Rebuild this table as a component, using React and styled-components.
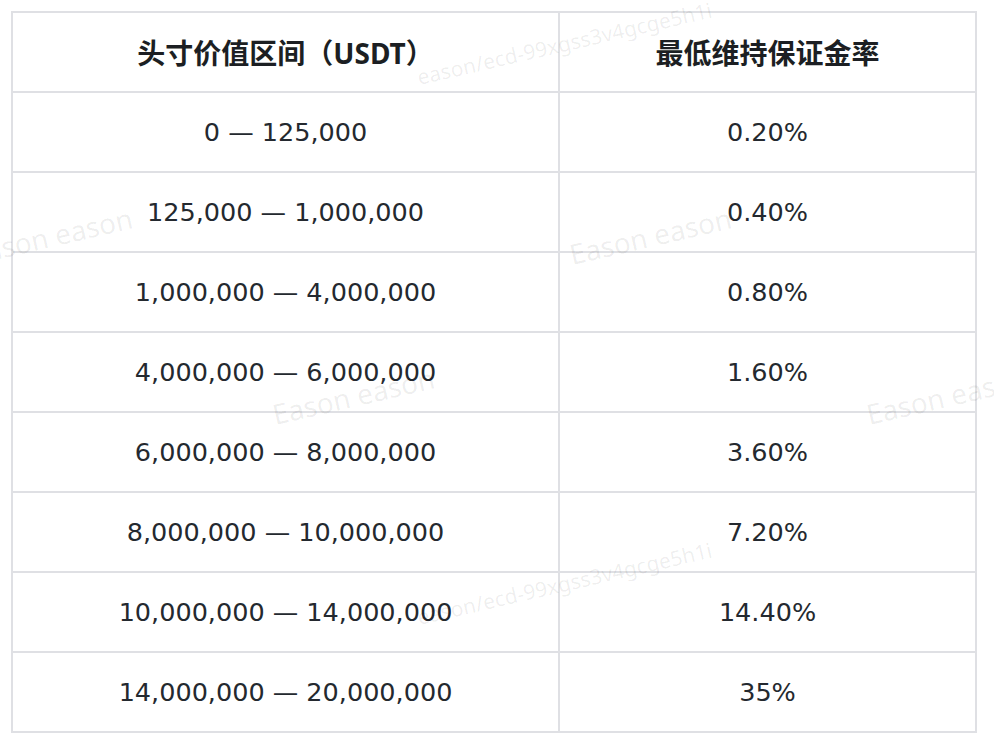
import React from 'react';
import styled, { createGlobalStyle } from 'styled-components';

const GlobalStyle = createGlobalStyle`
  html, body {
    margin: 0;
    padding: 0;
    background: #ffffff;
  }
`;

const Page = styled.div`
  position: relative;
  width: 994px;
  height: 748px;
  box-sizing: border-box;
  padding: 11px 0 0 11px;
  overflow: hidden;
  background: #fff;
`;

const Table = styled.table`
  width: 964px;
  border-collapse: collapse;
  table-layout: fixed;
  font-family: "DejaVu Sans", Verdana, sans-serif;
  color: #24292f;
`;

const Cell = styled.td`
  height: 78px;
  padding: 0;
  border: 2px solid #dfe0e4;
  text-align: center;
  vertical-align: middle;
  font-size: 25.5px;
`;

const HeadCell = styled(Cell).attrs({ as: 'th' })`
  font-family: "Noto Sans", "Noto Sans CJK SC", sans-serif;
  font-weight: 700;
  font-size: 28px;
  color: #1c1f23;
`;

const Watermark = styled.span`
  position: absolute;
  left: ${p => p.x}px;
  top: ${p => p.y}px;
  transform: rotate(-13deg);
  transform-origin: left bottom;
  font-family: "Noto Sans", sans-serif;
  font-size: ${p => p.size}px;
  line-height: 1;
  color: rgba(0, 0, 0, 0.07);
  white-space: nowrap;
  pointer-events: none;
`;

const rows = [
  ['0 — 125,000', '0.20%'],
  ['125,000 — 1,000,000', '0.40%'],
  ['1,000,000 — 4,000,000', '0.80%'],
  ['4,000,000 — 6,000,000', '1.60%'],
  ['6,000,000 — 8,000,000', '3.60%'],
  ['8,000,000 — 10,000,000', '7.20%'],
  ['10,000,000 — 14,000,000', '14.40%'],
  ['14,000,000 — 20,000,000', '35%'],
];

const marks = [
  { text: 'eason/ecd-99xgss3v4gcge5h1i', x: 420, y: 67, size: 21 },
  { text: 'eason/ecd-99xgss3v4gcge5h1i', x: 420, y: 607, size: 21 },
  { text: 'Eason eason', x: -26, y: 240, size: 28 },
  { text: 'Eason eason', x: 573, y: 240, size: 28 },
  { text: 'Eason eason', x: 276, y: 400, size: 28 },
  { text: 'Eason eason', x: 870, y: 400, size: 28 },
];

export default function App() {
  return (
    <Page>
      <GlobalStyle />
      <Table>
        <colgroup>
          <col style={{ width: 547 }} />
          <col style={{ width: 417 }} />
        </colgroup>
        <thead>
          <tr>
            <HeadCell>头寸价值区间（USDT）</HeadCell>
            <HeadCell>最低维持保证金率</HeadCell>
          </tr>
        </thead>
        <tbody>
          {rows.map(([range, rate]) => (
            <tr key={range}>
              <Cell>{range}</Cell>
              <Cell>{rate}</Cell>
            </tr>
          ))}
        </tbody>
      </Table>
      {marks.map((m, i) => (
        <Watermark key={i} x={m.x} y={m.y} size={m.size}>{m.text}</Watermark>
      ))}
    </Page>
  );
}
